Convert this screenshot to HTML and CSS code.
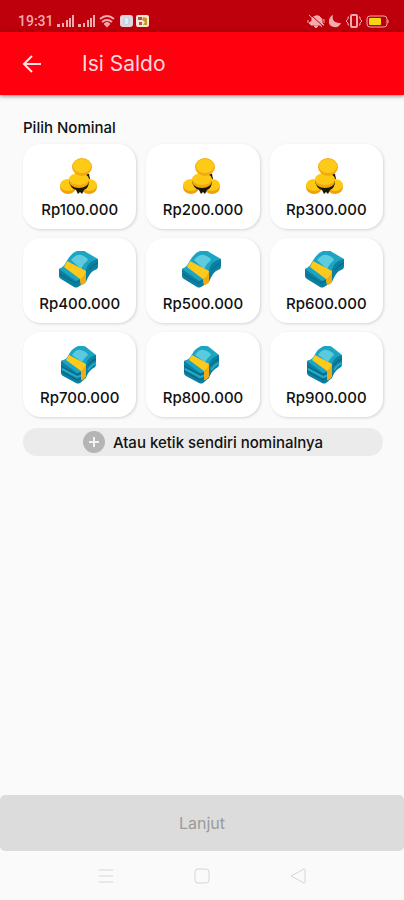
FILE: index.html
```html
<!DOCTYPE html>
<html lang="id">
<head>
	<meta charset="utf-8">
	<meta name="viewport" content="width=device-width, initial-scale=1">
	<title>Isi Saldo</title>
	<link rel="stylesheet" href="styles.css">
</head>
<body>
	<svg class="sprite" aria-hidden="true">
		<symbol id="coins" viewBox="0 0 44 42">
			<path d="M24 17l7 1 1 5-6 2z" fill="#1c1605"/>
			<ellipse cx="10" cy="31" rx="8" ry="7" fill="#eda10c"/>
			<ellipse cx="10" cy="29" rx="8" ry="6" fill="#fdc913"/>
			<ellipse cx="31" cy="31" rx="8" ry="7" fill="#eda10c"/>
			<ellipse cx="31" cy="29" rx="8" ry="6" fill="#fdc913"/>
			<path d="M11 25h20q0 7-5 9l-2 4-2-2-2 2-2-4q-6-2-7-9z" fill="#1c1605"/>
			<ellipse cx="21" cy="25" rx="10" ry="7" fill="#f0a80c"/>
			<ellipse cx="21" cy="23" rx="10" ry="6" fill="#fdc913"/>
			<ellipse cx="24" cy="11" rx="10" ry="9" fill="#f2ab0e"/>
			<ellipse cx="24" cy="10" rx="9" ry="7" fill="#fdcb17"/>
		</symbol>
		<symbol id="bundle" viewBox="0 0 44 42">
			<path d="M1 19v7q0 2 2 3l13 8q2 1 4 0l8-5q3-8 7-11l4-2q1-1 1-3V9L24 9z" fill="#0b7f9f"/>
			<path d="M1 19Q6 17 8 12q5-9 11-11h7q1 0 2 1l12 7q-10 2-12 11-3 9-10 11z" fill="#1ca5c3"/>
			<path d="M13 10q5-6 10-5 6 2 7 5-5 4-7 9z" fill="#5fcbdf"/>
			<path d="M2 24l15 9q7-2 10-7M31 20q3-5 9-7" fill="none" stroke="#0a6786" stroke-width="1"/>
			<path d="M9 11l19 10v11q-2 3-5 3l-1-6L6 17z" fill="#fdc91a"/>
			<path d="M28 21v11q-2 3-5 3l-1-6q5-3 6-8z" fill="#efab17"/>
		</symbol>
		<symbol id="stack" viewBox="0 0 44 42">
			<path d="M3 17v12q0 2 2 3l13 7q2 1 4 0l6-5q2-6 6-9l3-2q1-1 1-3v-9L22 10z" fill="#0b7f9f"/>
			<path d="M3 17q5-1 7-5 4-8 10-10h5q2 0 3 1l10 8q-8 2-10 9-2 8-9 9z" fill="#1ca5c3"/>
			<path d="M14 11q4-6 9-5 6 2 7 5-4 3-6 7z" fill="#5acbdf"/>
			<path d="M3 22l16 9q6-2 9-6M3 27l16 9q6-2 9-6M30 21q4-5 8-6" fill="none" stroke="#075f7e" stroke-width="1"/>
			<path d="M4 25l15 8q5-1 8-5M30 26q3-5 8-7" fill="none" stroke="#22a9c6" stroke-width="2"/>
			<path d="M11 11l17 9v12q-2 4-5 4v-9L8 16z" fill="#fdc91a"/>
			<path d="M28 20v12q-2 4-5 4v-9q4-3 5-7z" fill="#efab17"/>
		</symbol>
	</svg>

	<div class="statusbar">
		<span class="time">19:31</span>
		<svg width="18" height="14" viewBox="0 0 18 14" fill="#f4a9ad">
			<path d="M0 10h3v3H0zM5 9h2v4H5zM9 6h2v7H9zM12 4h2v9h-2zM15 1h2v12h-2z"/>
		</svg>
		<svg width="18" height="14" viewBox="0 0 18 14" fill="#f4a9ad">
			<path d="M0 10h3v3H0zM5 9h2v4H5zM9 6h2v7H9zM12 4h2v9h-2zM15 1h2v12h-2z"/>
		</svg>
		<svg width="16" height="14" viewBox="0 0 16 14" fill="none" stroke="#f4a9ad" stroke-width="2">
			<path d="M1 5q7-6 14 0M3 8q5-4 10 0M6 10q2-2 4 0L8 12z"/>
		</svg>
		<svg class="app" width="13" height="14" viewBox="0 0 13 14">
			<rect y="1" width="13" height="12" rx="3" fill="#e3d3dc"/>
			<rect x="3" y="3" width="7" height="8" rx="2" fill="#bdd8e6"/>
			<path d="M5 5h3M5 7h3M5 9h3" stroke="#fff"/>
		</svg>
		<svg width="13" height="14" viewBox="0 0 13 14">
			<rect y="1" width="13" height="12" rx="2" fill="#f7e6d8"/>
			<path d="M2 3h4v3H2zM3 8h3v3H3z" fill="#b8533f"/>
			<path d="M7 3l4 1v7H7l2-3-3-2z" fill="#c29b22"/>
		</svg>
		<span class="space"></span>
		<svg width="18" height="14" viewBox="0 0 18 14">
			<path d="M5 4q3-3 7-2l3 3v4l2 2H4l-2-2 3-2zM7 12h4l-2 2zM1 6v3M17 5v4" fill="#f4a9ad" stroke="#f4a9ad"/>
			<path d="M4 1l13 12" stroke="#bd000b" stroke-width="1"/>
			<path d="M2 1l13 12" stroke="#f4a9ad" stroke-width="1"/>
		</svg>
		<svg width="14" height="14" viewBox="0 0 14 14">
			<path d="M5 1q-2 8 8 8-2 5-7 4Q0 12 1 6q1-4 4-5z" fill="#f4a9ad"/>
		</svg>
		<svg width="18" height="14" viewBox="0 0 18 14" fill="none" stroke="#f4a9ad" stroke-width="1">
			<rect x="6" y="1" width="6" height="12" rx="1" stroke-width="2"/>
			<path d="M4 3H3v2L1 7l2 2v2h1M14 3h1v2l2 2-2 2v2h-1"/>
		</svg>
		<svg width="23" height="14" viewBox="0 0 23 14">
			<rect x="1" y="2" width="20" height="11" rx="3" fill="none" stroke="#f4a9ad"/>
			<path d="M22 6v3" stroke="#f4a9ad"/>
			<rect x="3" y="4" width="12" height="7" rx="1" fill="#fbd515"/>
		</svg>
	</div>

	<header class="appbar">
		<button class="back" type="button" aria-label="Kembali">
			<svg width="20" height="20" viewBox="0 0 20 20" fill="none" stroke="#ffe3e5" stroke-width="2">
				<path d="M19 10H2M10 2l-8 8 8 8"/>
			</svg>
		</button>
		<h1>Isi Saldo</h1>
	</header>

	<main>
		<h2>Pilih Nominal</h2>
		<div class="grid">
			<button class="card" type="button"><svg><use href="#coins"/></svg>Rp100.000</button>
			<button class="card" type="button"><svg><use href="#coins"/></svg>Rp200.000</button>
			<button class="card" type="button"><svg><use href="#coins"/></svg>Rp300.000</button>
			<button class="card" type="button"><svg><use href="#bundle"/></svg>Rp400.000</button>
			<button class="card" type="button"><svg><use href="#bundle"/></svg>Rp500.000</button>
			<button class="card" type="button"><svg><use href="#bundle"/></svg>Rp600.000</button>
			<button class="card" type="button"><svg><use href="#stack"/></svg>Rp700.000</button>
			<button class="card" type="button"><svg><use href="#stack"/></svg>Rp800.000</button>
			<button class="card" type="button"><svg><use href="#stack"/></svg>Rp900.000</button>
		</div>
		<button class="custom" type="button">
			<svg width="22" height="22" viewBox="0 0 22 22">
				<circle cx="11" cy="11" r="11" fill="#b5b5b5"/>
				<path d="M11 6v10M6 11h10" stroke="#f2f2f2" stroke-width="2"/>
			</svg>
			Atau ketik sendiri nominalnya
		</button>
	</main>

	<button class="next" type="button" disabled>Lanjut</button>

	<nav class="navbar">
		<button type="button" aria-label="Menu">
			<svg width="16" height="16" viewBox="0 0 16 16"><path d="M1 2h14M1 8h14M1 14h14"/></svg>
		</button>
		<button type="button" aria-label="Beranda">
			<svg width="16" height="16" viewBox="0 0 16 16"><rect x="1" y="1" width="14" height="14" rx="3"/></svg>
		</button>
		<button type="button" aria-label="Kembali">
			<svg width="16" height="16" viewBox="0 0 16 16"><path d="M15 2v12q0 1-1 1L1 8l13-7q1 0 1 1z"/></svg>
		</button>
	</nav>
</body>
</html>
```
FILE: styles.css
```css
* {
	box-sizing: border-box;
}
body {
	display: flex;
	flex-direction: column;
	min-height: 100vh;
	margin: 0;
	background-color: #fafafa;
	color: #111;
	font-family: Inter, "Open Sans", sans-serif;
}
button {
	padding: 0;
	border: 0;
	background: none;
	color: inherit;
	font: inherit;
}
svg {
	display: block;
	flex: none;
}
h1, h2 {
	margin: 0;
}
.sprite {
	position: absolute;
	width: 0;
	height: 0;
}
.statusbar {
	display: flex;
	align-items: center;
	gap: 3px;
	height: 32px;
	padding: 9px 15px 0 18px;
	background-color: #bd000b;
	color: #f4a9ad;
}
.app {
	margin-left: 2px;
}
.time {
	width: 36px;
	font: 500 14px/20px Roboto, sans-serif;
}
.space {
	flex: 1;
}
.appbar {
	display: flex;
	align-items: center;
	gap: 40px;
	height: 63px;
	padding: 0 22px;
	background-color: #ff000f;
	box-shadow: 0 1px 4px rgba(0, 0, 0, 0.5);
}
.appbar h1 {
	color: #ffd9dc;
	font-size: 21px;
	font-weight: 400;
	line-height: 28px;
}
main {
	flex: 1;
	padding: 23px 21px 24px 23px;
}
main h2 {
	margin-bottom: 6px;
	font-size: 15px;
	font-weight: 500;
	line-height: 20px;
}
.grid {
	display: grid;
	grid-template-columns: repeat(3, 1fr);
	gap: 9px 10px;
}
.card {
	display: flex;
	flex-direction: column;
	align-items: center;
	height: 85px;
	padding-top: 12px;
	border-radius: 18px;
	background-color: #fff;
	box-shadow: 1px 1px 3px rgba(0, 0, 0, 0.15);
	font-size: 15px;
	font-weight: 500;
	line-height: 24px;
}
.card svg {
	width: 44px;
	height: 42px;
}
.custom {
	display: flex;
	align-items: center;
	justify-content: center;
	gap: 8px;
	width: 100%;
	height: 28px;
	margin-top: 11px;
	border-radius: 14px;
	background-color: #ebebeb;
	font-size: 15px;
	font-weight: 500;
}
.next {
	height: 56px;
	border-radius: 5px;
	background-color: #dcdcdc;
	color: #9b9b9b;
	font-size: 16px;
}
.navbar {
	display: flex;
	justify-content: center;
	gap: 80px;
	height: 49px;
}
.navbar svg {
	fill: none;
	stroke: #d6d6d6;
	stroke-width: 1;
}
```
